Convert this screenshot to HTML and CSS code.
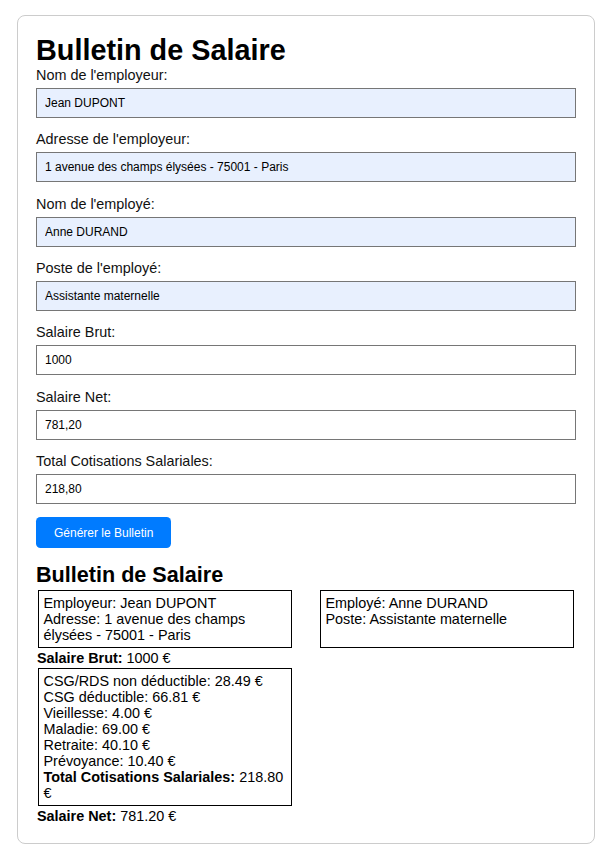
FILE: index.html
```html
<!DOCTYPE html>
<html lang="fr">
<head>
<meta charset="utf-8">
<title>Bulletin de Salaire</title>
<link rel="stylesheet" href="styles.css">
</head>
<body>
<div class="container">
  <h1 class="title">Bulletin de Salaire</h1>
  <form class="form">
    <div class="group">
      <label class="label">Nom de l'employeur:</label>
      <input class="input filled" type="text" value="Jean DUPONT">
    </div>
    <div class="group">
      <label class="label">Adresse de l'employeur:</label>
      <input class="input filled" type="text" value="1 avenue des champs élysées - 75001 - Paris">
    </div>
    <div class="group">
      <label class="label">Nom de l'employé:</label>
      <input class="input filled" type="text" value="Anne DURAND">
    </div>
    <div class="group">
      <label class="label">Poste de l'employé:</label>
      <input class="input filled" type="text" value="Assistante maternelle">
    </div>
    <div class="group">
      <label class="label">Salaire Brut:</label>
      <input class="input" type="text" value="1000">
    </div>
    <div class="group">
      <label class="label">Salaire Net:</label>
      <input class="input" type="text" value="781,20">
    </div>
    <div class="group">
      <label class="label">Total Cotisations Salariales:</label>
      <input class="input" type="text" value="218,80">
    </div>
    <button class="btn" type="button">Générer le Bulletin</button>
  </form>
  <section class="result">
    <h2 class="subtitle">Bulletin de Salaire</h2>
    <div class="parties">
      <div class="box">Employeur: Jean DUPONT<br>Adresse: 1 avenue des champs élysées - 75001 - Paris</div>
      <div class="box">Employé: Anne DURAND<br>Poste: Assistante maternelle</div>
    </div>
    <p class="line"><strong>Salaire Brut:</strong> 1000 €</p>
    <div class="box single">
      CSG/RDS non déductible: 28.49 €<br>
      CSG déductible: 66.81 €<br>
      Vieillesse: 4.00 €<br>
      Maladie: 69.00 €<br>
      Retraite: 40.10 €<br>
      Prévoyance: 10.40 €<br>
      <strong>Total Cotisations Salariales:</strong> 218.80 €
    </div>
    <p class="line"><strong>Salaire Net:</strong> 781.20 €</p>
  </section>
</div>
</body>
</html>
```
FILE: styles.css
```css
html, body {
  margin: 0;
  padding: 0;
  background: #ffffff;
}
body {
  font-family: "Liberation Sans", Arial, sans-serif;
  font-size: 14.4px;
  color: #000;
  padding: 15px 14px 15px 17px;
}
.container {
  width: 540px;
  border: 1px solid #cccccc;
  border-radius: 8px;
  padding: 18px 18px 19px;
  background: #fff;
}
.title {
  font-size: 28.8px;
  font-weight: bold;
  margin: 0;
  line-height: normal;
}
.form {
  margin: 0;
}
.group {
  margin-bottom: 13.33px;
}
.label {
  display: block;
  line-height: 16.5px;
  margin-bottom: 4.5px;
  color: #111;
}
.input {
  display: block;
  box-sizing: border-box;
  width: 100%;
  height: 30px;
  margin: 0;
  padding: 0 8px;
  font-family: "Liberation Sans", Arial, sans-serif;
  font-size: 12px;
  color: #000;
  border: 1px solid #767676;
  border-radius: 0;
  background: #fff;
  outline: none;
}
.input.filled {
  background: #e8f0fe;
}
.btn {
  display: block;
  height: 31px;
  padding: 0 18px;
  margin: 1.7px 0 0;
  border: none;
  border-radius: 4.5px;
  background: #007bff;
  color: #fff;
  font-family: "Liberation Sans", Arial, sans-serif;
  font-size: 12px;
}
.result {
  margin-top: 14px;
}
.subtitle {
  font-size: 21.6px;
  font-weight: bold;
  margin: 0;
  line-height: normal;
}
.parties {
  display: flex;
  justify-content: space-between;
}
.box {
  box-sizing: border-box;
  width: 254px;
  margin: 2px;
  border: 1px solid #000;
  padding: 3.6px 4.5px 4.5px;
  line-height: normal;
}
.line {
  margin: 0 0 0 1px;
  line-height: normal;
}
```
